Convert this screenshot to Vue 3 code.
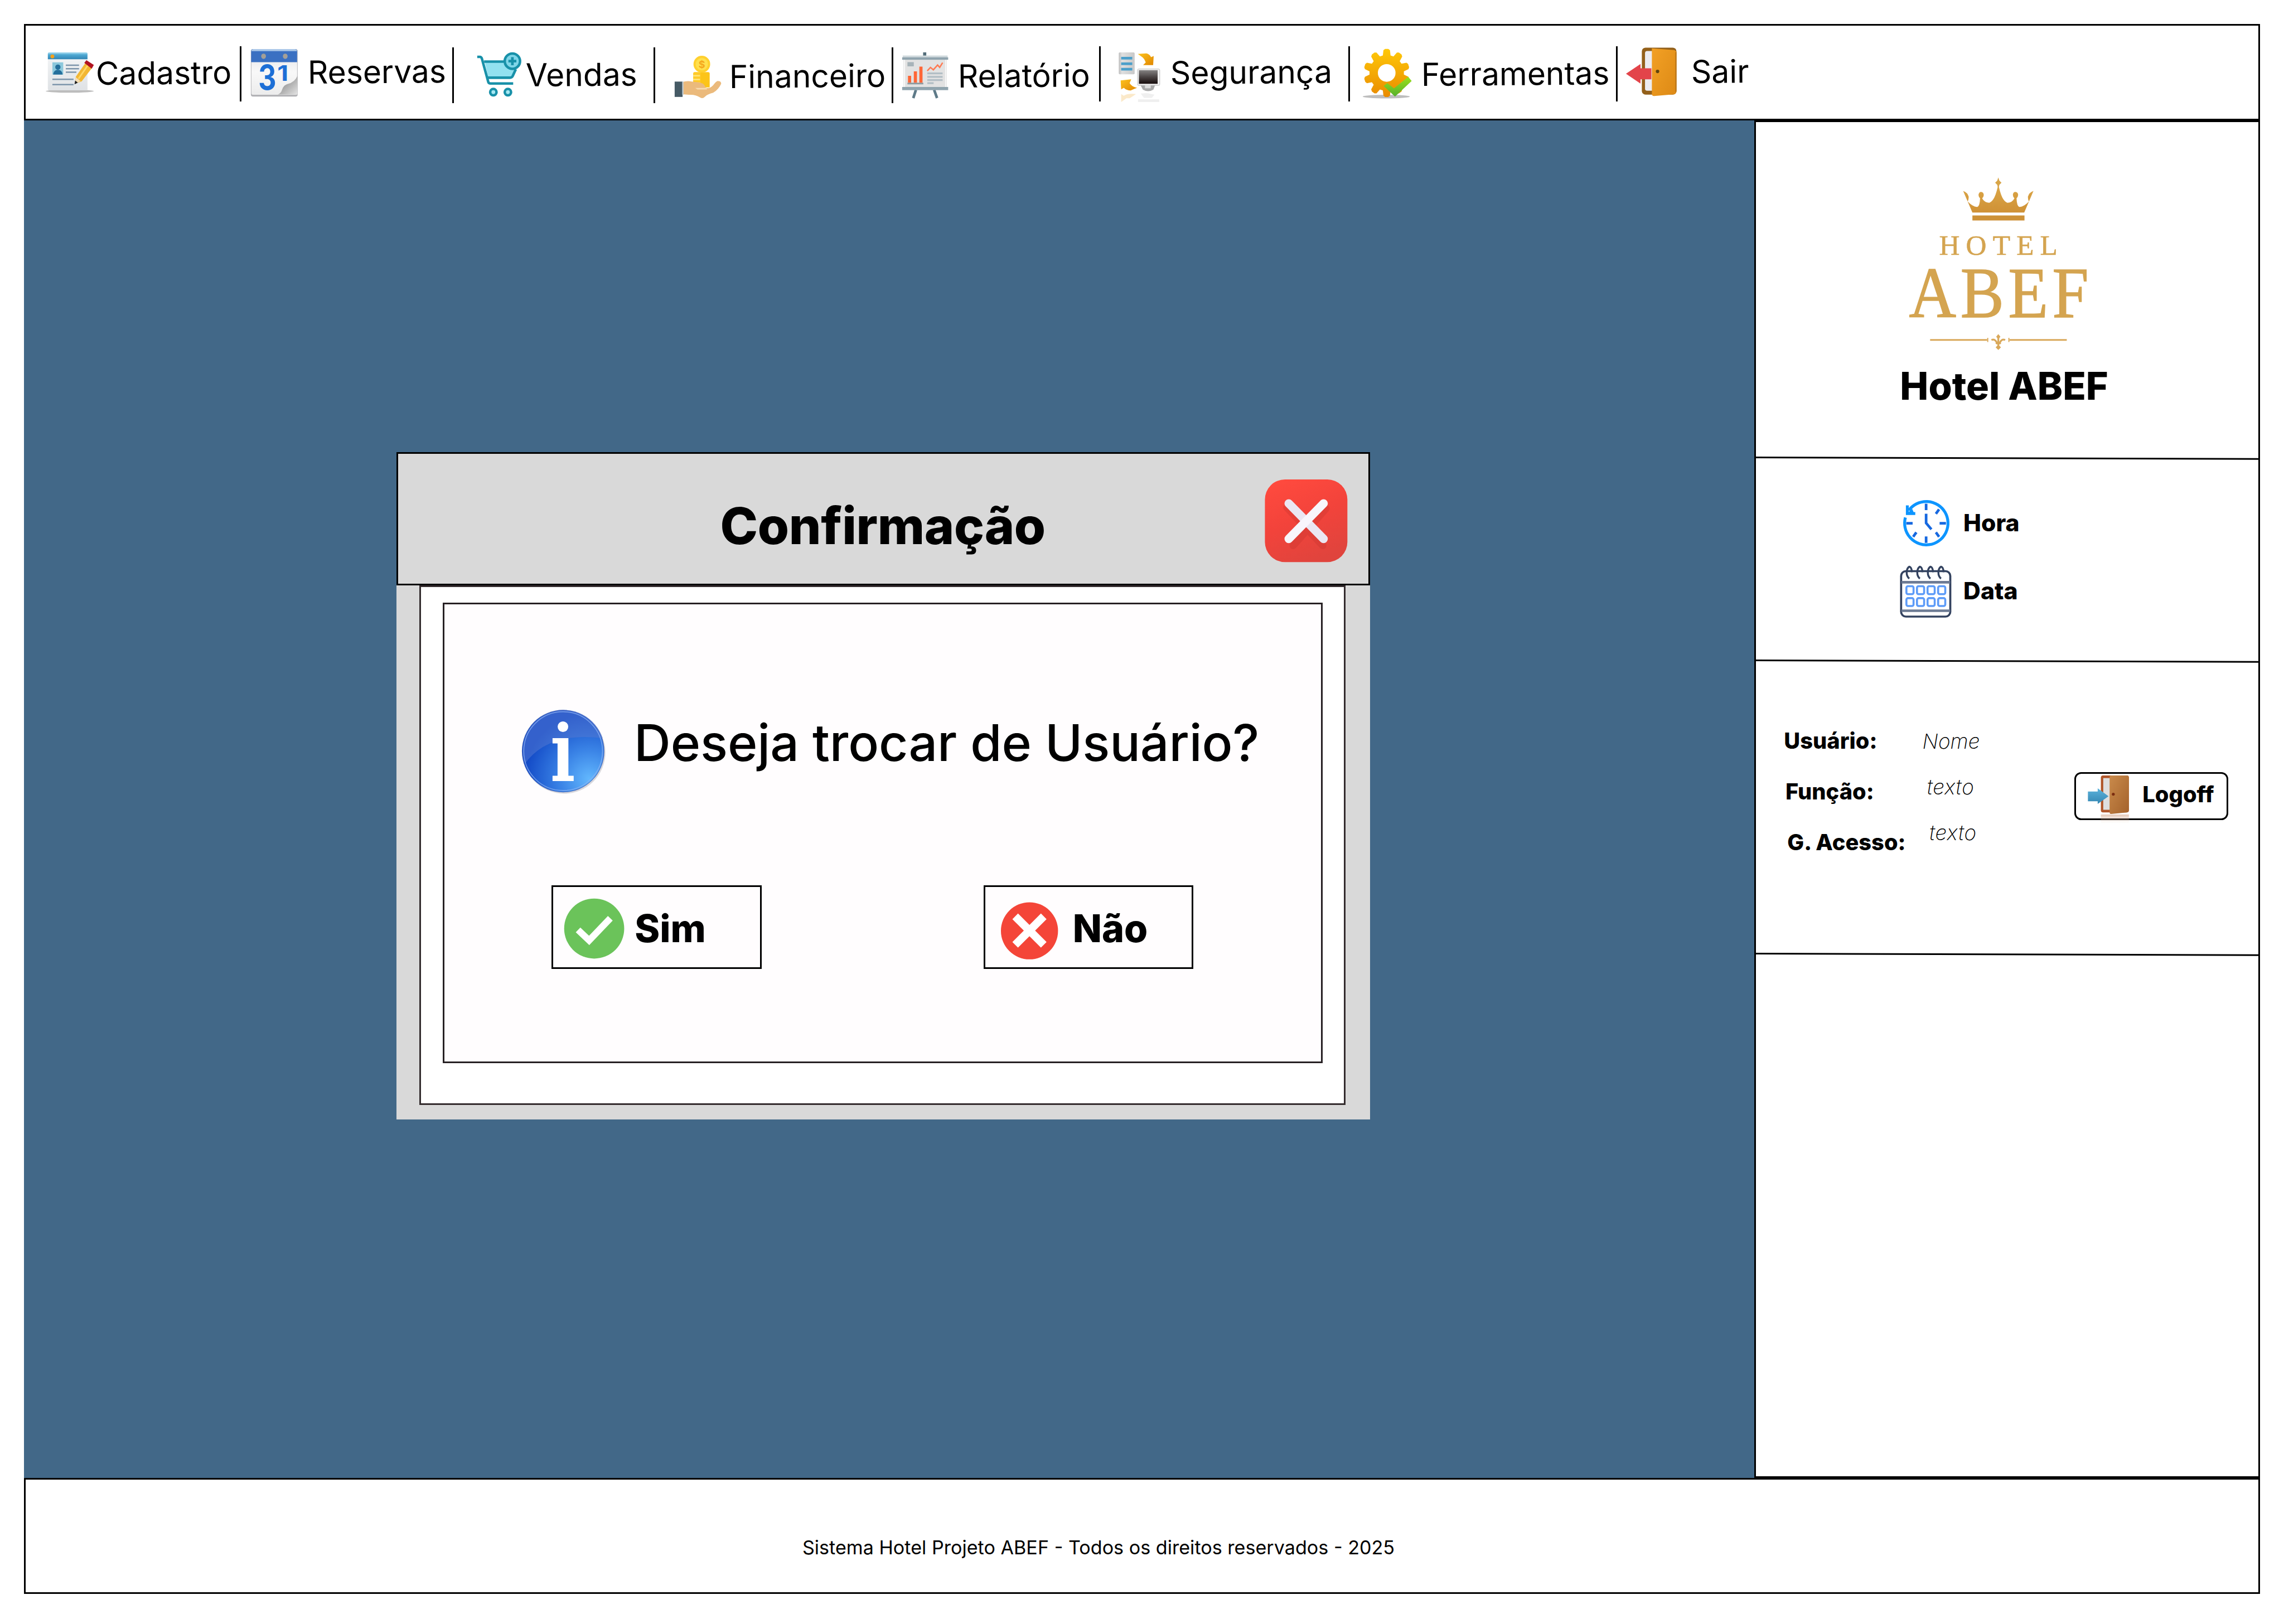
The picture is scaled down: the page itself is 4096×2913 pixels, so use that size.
<script setup>
// Contour of the ten-tooth gear used by the tools menu
const gearPath = (() => {
  const cx = 2622.3
  const cy = 138.3
  const teeth = 10
  const pts = []
  for (let i = 0; i < teeth; i++) {
    const base = (i * 360) / teeth
    const ring = [[-13, 34], [-8.5, 43.5], [-4, 45.5], [4, 45.5], [8.5, 43.5], [13, 34]]
    for (const [offset, r] of ring) {
      const a = ((base + offset - 90) * Math.PI) / 180
      pts.push(`${(cx + r * 0.96 * Math.cos(a)).toFixed(1)} ${(cy + r * Math.sin(a)).toFixed(1)}`)
    }
  }
  return `M${pts.join('L')}ZM2605.6 138.3a16.7 16.7 0 1 0 33.4 0a16.7 16.7 0 1 0 -33.4 0Z`
})()

const rings = [3611, 3631, 3651, 3671]
const dayRows = [1108.5, 1131]
</script>

<template>
  <div class="screen">
    <header class="menu">
      <div class="item cadastro">
        <svg class="icon" viewBox="86 96 92 82">
          <defs>
            <linearGradient id="cadBar" x1="0" y1="0" x2="0" y2="1">
              <stop offset="0" stop-color="#b5e3f5" /><stop offset=".35" stop-color="#4fa9d3" /><stop offset="1" stop-color="#3285b4" />
            </linearGradient>
            <linearGradient id="cadPage" x1="0" y1="0" x2="0" y2="1">
              <stop offset="0" stop-color="#f4f6f7" /><stop offset="1" stop-color="#dfe2e5" />
            </linearGradient>
          </defs>
          <ellipse cx="131.500" cy="172.500" rx="45.500" ry="3" fill="#bdbdbd" />
          <rect x="90" y="99" width="75" height="72" rx="3" fill="url(#cadPage)" />
          <path d="M90 112V102q0-3 3-3h69q3 0 3 3v10Z" fill="url(#cadBar)" />
          <circle cx="98.600" cy="106.700" r="3.600" fill="#f5a11c" />
          <rect x="98.600" y="118" width="20.500" height="23" fill="#8cc8dc" />
          <circle cx="109" cy="127" r="5" fill="#246f9b" />
          <path d="M100 141q1-9 9-9t9 9Z" fill="#246f9b" />
          <g stroke="#7d95ab" stroke-width="2.600">
            <path d="M124 123.500h25M124 130h25M124 136.500h20M98.600 150h40M98.600 160h40" />
          </g>
          <path d="M141.500 158l1.500-13 19-27 12 10-20 26Z" fill="#f2b733" />
          <path d="M148 149l18-26" stroke="#ffd766" stroke-width="3" />
          <path d="M141.500 158.500l1.500-12 9 7Z" fill="#f3dcb5" />
          <path d="M140.500 159.500l1.200-7 5 4Z" fill="#1d1d1d" />
          <path d="M159 119l4-5 14 9-4 7Z" fill="#b01220" />
        </svg>
        <span class="label">Cadastro</span>
      </div>

      <div class="item reservas">
        <svg class="icon" viewBox="472 91 92 93">
          <defs>
            <linearGradient id="resPage" x1="0" y1="0" x2="0" y2="1">
              <stop offset="0" stop-color="#e4e4e6" /><stop offset=".5" stop-color="#f8f8f8" /><stop offset="1" stop-color="#ececec" />
            </linearGradient>
            <linearGradient id="resCurl" x1="0" y1="0" x2="1" y2="1">
              <stop offset="0" stop-color="#ffffff" /><stop offset=".35" stop-color="#9b9b9b" /><stop offset="1" stop-color="#e3e3e3" />
            </linearGradient>
          </defs>
          <rect x="474" y="93" width="88.500" height="90" rx="4" fill="#b3b3b6" />
          <rect x="475" y="94" width="86.500" height="85.500" rx="3" fill="url(#resPage)" />
          <path d="M474.500 118V97q0-4 4-4h79q4 0 4 4v21Z" fill="#3a70c2" />
          <path d="M475 97q0-4 4-4h78q4 0 4 4Z" fill="#a9c6e8" />
          <ellipse cx="498" cy="106.700" rx="4.500" ry="5" fill="#a39f97" />
          <ellipse cx="539" cy="106.700" rx="4.500" ry="5" fill="#a39f97" />
          <text x="488" y="170" font-size="65" font-weight="700" textLength="34" lengthAdjust="spacingAndGlyphs" fill="#1d6fd6">3</text>
          <text x="524" y="153" font-size="41" font-weight="700" textLength="21" lengthAdjust="spacingAndGlyphs" fill="#1d6fd6">1</text>
          <path d="M562 144q-5 12-18 15q-9 3-11 11q-2 7-8 9h37Z" fill="url(#resCurl)" />
        </svg>
        <span class="label">Reservas</span>
      </div>

      <div class="item vendas">
        <svg class="icon" viewBox="900 97 88 88">
          <path d="M917 116h35q2 13 24 17l-8 14h-44Z" fill="#92e1f0" />
          <g fill="none" stroke="#1891a9" stroke-width="4.800" stroke-linejoin="round">
            <path d="M903 107.500h5q3 0 4 4l12 44q1 2.500 4 2.500h43" />
            <path d="M916 116.500h37M976 131l-6 13q-1.500 3-5 3h-42" />
            <circle cx="969.500" cy="115.700" r="14.500" fill="#7fd6e8" />
            <circle cx="933.500" cy="174.300" r="6" fill="#a5e8f3" />
            <circle cx="961" cy="174.300" r="6" fill="#a5e8f3" />
            <path d="M969.500 108v15.500M962 115.700h15" stroke-width="5" />
          </g>
        </svg>
        <span class="label">Vendas</span>
      </div>

      <div class="item financeiro">
        <svg class="icon" viewBox="1274 103 92 84">
          <path d="M1311 139q0-3 3-3h25q3 0 3 3v25h-31Z" fill="#ffca28" />
          <path d="M1311 143h13M1311 150h13M1311 157h13" stroke="#ffe57a" stroke-width="3" />
          <path d="M1325 137h17v28h-17Z" fill="#fcc419" />
          <circle cx="1327.400" cy="121" r="15.800" fill="#ffd02e" />
          <circle cx="1327.400" cy="121" r="11.500" fill="#ffe04e" />
          <text x="1327.400" y="128" font-size="19" font-weight="700" text-anchor="middle" fill="#f5a81c">$</text>
          <path d="M1290 155q10-3 18-1l10 1q14 1 16 9q0 3 7 2q6-2 10-8q5-6 8-5q5 0 5 5q-5 11-15 17q-12 3-16 8q-4 4-9 1q-9-6-21-5l-13-1Z" fill="#ebba7c" />
          <path d="M1315 166h20q2 0 2 3h-18Z" fill="#f9dcae" />
          <rect x="1276" y="154" width="15" height="29" fill="#465a65" />
          <path d="M1291.500 154v25" stroke="#c2ced4" stroke-width="2.500" />
        </svg>
        <span class="label">Financeiro</span>
      </div>

      <div class="item relatorio">
        <svg class="icon" viewBox="1704 97 90 90">
          <path d="M1748.600 99v10" stroke="#546e7a" stroke-width="6" />
          <path d="M1732 170l-5 15.500M1766.500 170l5.500 15.500" stroke="#5e7a88" stroke-width="5" />
          <rect x="1709" y="112" width="81" height="53" fill="#fafafa" stroke="#e0e0e0" />
          <rect x="1711.500" y="112" width="76" height="53" fill="#e2e2e2" />
          <rect x="1707" y="105" width="85" height="4" fill="#cfd8dc" />
          <rect x="1706" y="108.500" width="87" height="4.500" fill="#90a4ae" />
          <rect x="1706" y="164.500" width="87" height="6" fill="#90a4ae" />
          <path d="M1717 143.500h6v13h-6ZM1728 135h6v21.500h-6ZM1738.500 126h6v30.500h-6Z" fill="#ff6636" />
          <path d="M1716 156.500h30v3h-30Z" fill="#8d989d" />
          <path d="M1716 117.500h12v8h-12Z" fill="#a7b3b9" />
          <path d="M1753.500 134l6-6.500 5.500 4.500 8-9 4 4.500 5.500-9" fill="none" stroke="#ff7a52" stroke-width="2.600" />
          <path d="M1753.500 138.700h29M1753.500 145.500h29M1753.500 151.500h29M1753.500 157.200h12" stroke="#b2bec5" stroke-width="3.400" />
        </svg>
        <span class="label">Relatório</span>
      </div>

      <div class="item seguranca">
        <svg class="icon" viewBox="2113 97 83 98">
          <defs>
            <linearGradient id="segArrow" x1="0" y1="0" x2="1" y2="1">
              <stop offset="0" stop-color="#fdc31f" /><stop offset="1" stop-color="#e08600" />
            </linearGradient>
            <linearGradient id="segScreen" x1="0" y1="0" x2="0" y2="1">
              <stop offset="0" stop-color="#858383" /><stop offset=".5" stop-color="#4a4444" /><stop offset="1" stop-color="#170c0c" />
            </linearGradient>
            <linearGradient id="segTower" x1="0" y1="0" x2="1" y2="0">
              <stop offset="0" stop-color="#bdbdbd" /><stop offset=".2" stop-color="#dfdfdf" /><stop offset="1" stop-color="#c8c8c8" />
            </linearGradient>
          </defs>
          <rect x="2115.500" y="99" width="30" height="41.500" rx="2" fill="url(#segTower)" />
          <path d="M2120 110h21M2120 120.700h21M2120 131h21" stroke="#4c9fca" stroke-width="5" />
          <path d="M2151.500 102l16-1q6 1 9 7l5-2-1 17h-19l5-5q-3-8-8-11Z" fill="url(#segArrow)" />
          <rect x="2151" y="130.500" width="42" height="31" rx="2" fill="#f4f4f4" stroke="#b9b9b9" />
          <rect x="2153.500" y="132.700" width="35.500" height="25.800" fill="url(#segScreen)" />
          <path d="M2157 161.500h27l-3 8q-10 6-20 0Z" fill="#a9a9a9" />
          <path d="M2165 161h11v6h-11Z" fill="#dcdcdc" />
          <path d="M2119 152l1 17 5-3q5 5 13 5l12-5q-10-2-14-9l3-7Z" fill="url(#segArrow)" />
          <path d="M2120 178l5 3q8-5 23-3l-12 8h-6l-10 7Z" fill="#f6cf87" opacity=".45" />
          <path d="M2157 177l12-1 14 3-5 6h-15ZM2152 188h40v5h-40Z" fill="#c9c9c9" opacity=".3" />
        </svg>
        <span class="label">Segurança</span>
      </div>

      <div class="item ferramentas">
        <svg class="icon" viewBox="2575 91 96 97">
          <defs>
            <linearGradient id="gearFill" x1="0" y1="0" x2="0" y2="1">
              <stop offset="0" stop-color="#ffc808" /><stop offset="1" stop-color="#e98b00" />
            </linearGradient>
            <linearGradient id="gearCheck" x1="0" y1="0" x2="0" y2="1">
              <stop offset="0" stop-color="#9ae01c" /><stop offset="1" stop-color="#56b02c" />
            </linearGradient>
          </defs>
          <ellipse cx="2621.500" cy="183" rx="44.500" ry="3.500" fill="#bdbdbd" />
          <path :d="gearPath" fill="url(#gearFill)" fill-rule="evenodd" />
          <path d="M2616.500 163l7-5.500 12.500 10 27-22 6.500 8-31.500 29.500Z" fill="url(#gearCheck)" />
        </svg>
        <span class="label">Ferramentas</span>
      </div>

      <div class="item sair">
        <svg class="icon" viewBox="3074 88 98 94">
          <defs>
            <linearGradient id="exitDoor" x1="0" y1="0" x2="1" y2="1">
              <stop offset="0" stop-color="#f2a024" /><stop offset="1" stop-color="#dd8a16" />
            </linearGradient>
          </defs>
          <rect x="3105" y="89.500" width="65.500" height="89" rx="7" fill="#93601a" />
          <rect x="3111" y="96" width="20" height="75" rx="4" fill="#ececf0" />
          <path d="M3124 91l42 3q4 1 4.500 5v73q-.5 5-5 6l-37.500 3q-4 0-4-4Z" fill="url(#exitDoor)" />
          <path d="M3169.300 98v75" stroke="#b8751a" stroke-width="2" />
          <circle cx="3134.700" cy="134.500" r="3.300" fill="#5d430f" />
          <path d="M3075 139l27.500-18.500v8h20.500v21h-20.500v8Z" fill="#e3444a" />
        </svg>
        <span class="label">Sair</span>
      </div>
    </header>

    <main class="body">
      <section class="workspace">
        <div class="dialog">
          <div class="titlebar">
            <h1 class="title">Confirmação</h1>
            <svg class="close" viewBox="2391 905 159 160">
              <defs>
                <linearGradient id="closeFill" x1=".2" y1="0" x2=".6" y2="1">
                  <stop offset="0" stop-color="#ff4a3e" /><stop offset=".5" stop-color="#f2433b" /><stop offset="1" stop-color="#e0443d" />
                </linearGradient>
              </defs>
              <rect x="2392.500" y="907" width="156" height="156.500" rx="38" fill="url(#closeFill)" />
              <path d="M2434 960l68 72M2508 962l-62 70" stroke="#c8352f" stroke-width="14" stroke-linecap="round" opacity=".35" />
              <path d="M2437.500 952.500l66 67" stroke="#ebe6f2" stroke-width="16" stroke-linecap="round" />
              <path d="M2503.500 952.500l-66 67" stroke="#f8f6fc" stroke-width="16" stroke-linecap="round" />
            </svg>
          </div>
          <div class="panel">
            <div class="content">
              <div class="message">
                <svg class="info" viewBox="985 1341 162 164">
                  <defs>
                    <radialGradient id="infoFill" cx=".82" cy=".84" r=".8">
                      <stop offset="0" stop-color="#62b7fd" /><stop offset=".45" stop-color="#3a83e6" /><stop offset="1" stop-color="#1249c6" />
                    </radialGradient>
                  </defs>
                  <circle cx="1067" cy="1424" r="78" fill="#d9d9de" />
                  <circle cx="1065" cy="1421.500" r="78" fill="#4a67b5" />
                  <circle cx="1065" cy="1421.500" r="77" fill="url(#infoFill)" />
                  <path d="M993 1445a76 76 0 1 1 147-48q-103-13-147 48Z" fill="#5579d2" opacity=".5" />
                  <circle cx="1065" cy="1421.500" r="74.500" fill="none" stroke="#8fb4f3" stroke-width="1.800" opacity=".7" />
                  <circle cx="1064.700" cy="1375.300" r="10" fill="#ffffff" />
                  <path d="M1045 1397h30v71h10v10h-40v-10h9.500v-61h-9.500Z" fill="#ffffff" />
                </svg>
                <p class="question">Deseja trocar de Usuário?</p>
              </div>
              <div class="actions">
                <button class="choice yes">
                  <svg class="mark" viewBox="0 0 113 113">
                    <circle cx="56.500" cy="56.500" r="56.800" fill="#6bc35a" />
                    <path d="M26 59l21 20 40-42" fill="none" stroke="#ffffff" stroke-width="12.500" />
                  </svg>
                  <span class="answer">Sim</span>
                </button>
                <button class="choice no">
                  <svg class="mark" viewBox="0 0 108 109">
                    <circle cx="54" cy="54.500" r="54" fill="#f44538" />
                    <path d="M27 27l54 54M81 27l-54 54" stroke="#ffffff" stroke-width="15" />
                  </svg>
                  <span class="answer">Não</span>
                </button>
              </div>
            </div>
          </div>
        </div>
      </section>

      <aside class="sidebar">
        <div class="brand">
          <svg class="logo" viewBox="3600 330 360 340">
            <defs>
              <linearGradient id="gold" x1="0" y1="0" x2="0" y2="1">
                <stop offset="0" stop-color="#dca848" /><stop offset="1" stop-color="#cf9136" />
              </linearGradient>
            </defs>
            <path d="M3731 402L3713.500 361Q3722 364 3724 372Q3724 378 3722 381Q3731 391 3740 391.500Q3745 390 3745.500 375Q3742.500 372 3742.500 368.500Q3743.500 363 3747.500 363Q3752 363.500 3752.500 368.500Q3752.500 372 3749.500 375Q3754 383.500 3763 383.500Q3774 380 3780 348Q3786 380 3797 383.500Q3806 383.500 3810.500 375Q3807.500 372 3807.500 368.500Q3808 363 3812.500 363Q3817 363.500 3817.500 368.500Q3817.500 372 3814.500 375Q3815 390 3820 391.500Q3829 391 3838 381Q3836 378 3836 372Q3838 364 3846.500 361L3829 402Z" fill="url(#gold)" />
            <path d="M3780 335.500l2 6 4 4-4 4-1 4h-2l-1-4-4-4 4-4Z" fill="#d8a548" />
            <rect x="3731" y="407.500" width="98.500" height="9.500" fill="#cd9137" />
            <text class="hotel-word" x="3668" y="482" font-size="54" textLength="224" lengthAdjust="spacing">HOTEL</text>
            <text class="abef-word" x="3611" y="599.500" font-size="137" textLength="348" lengthAdjust="spacingAndGlyphs">ABEF</text>
            <g fill="none" stroke="#d9a85a" stroke-width="3.400">
              <path d="M3651 643h108M3801 643h108.500" />
              <path d="M3760 639v8M3800 639v8" stroke-width="2" />
              <path d="M3780 635v25M3767 643q8-3 11 8M3793 643q-8-3-11 8M3775 649h10" />
            </g>
            <path d="M3780 632l4 5-4 5-4-5ZM3780 652l5 5-5 5-5-5Z" fill="#d9a85a" />
          </svg>
          <h2 class="hotel-name">Hotel ABEF</h2>
        </div>
        <div class="rule"></div>
        <div class="clock">
          <div class="row hora">
            <svg viewBox="3598 945 90 90">
              <path d="M3603.300 979a41 41 0 1 0 6.500 -13.500" fill="none" stroke="#0d95ff" stroke-width="5.500" />
              <path d="M3607 956v15.500h15" fill="none" stroke="#0d95ff" stroke-width="5.500" />
              <path d="M3607 971.500l9-9 4 9Z" fill="#0d95ff" />
              <path d="M3642.500 953v12M3642.500 1015v12M3605 990h12M3668 990h12M3661 972l6-8.500M3661 1007l6 8.500M3624 1007l-6 8.500M3642.500 972v17.500l10 12" fill="none" stroke="#1668e0" stroke-width="5" />
            </svg>
            <span class="caption">Hora</span>
          </div>
          <div class="row data">
            <svg viewBox="3593 1070 98 98">
              <rect x="3595.500" y="1080" width="93" height="86" rx="9" fill="#ffffff" stroke="#33425f" stroke-width="3.900" />
              <path d="M3596 1101h92M3596 1155h92" stroke="#6d7b94" stroke-width="4.800" />
              <g fill="none" stroke="#33425f" stroke-width="3.600">
                <path v-for="x in rings" :key="x" :d="`M${x + 5} 1082q-1-10-5-10.500q-5 3-5 11q0 8 5 11.500`" />
              </g>
              <g fill="none" stroke="#5d9bf8" stroke-width="3.800">
                <template v-for="y in dayRows" :key="y">
                  <rect v-for="x in rings" :key="x" :x="x - 5.500" :y="y" width="13.500" height="15" rx="3" />
                </template>
              </g>
            </svg>
            <span class="caption">Data</span>
          </div>
        </div>
        <div class="rule"></div>
        <div class="session">
          <div class="keys">
            <span class="key">Usuário:</span>
            <span class="key">Função:</span>
            <span class="key">G. Acesso:</span>
          </div>
          <div class="values">
            <span class="value">Nome</span>
            <span class="value">texto</span>
            <span class="value">texto</span>
          </div>
          <button class="logoff">
            <svg viewBox="3947 1465 82 95">
              <defs>
                <linearGradient id="logDoor" x1="0" y1="0" x2="1" y2="1">
                  <stop offset="0" stop-color="#c98a4b" /><stop offset="1" stop-color="#a4622b" />
                </linearGradient>
                <linearGradient id="logFade" x1="0" y1="0" x2="0" y2="1">
                  <stop offset="0" stop-color="#c98f6c" stop-opacity=".5" /><stop offset="1" stop-color="#e9cdbc" stop-opacity="0" />
                </linearGradient>
                <linearGradient id="logArrow" x1="0" y1="0" x2="0" y2="1">
                  <stop offset="0" stop-color="#5bb2db" /><stop offset="1" stop-color="#3487b3" />
                </linearGradient>
              </defs>
              <path d="M3974 1541h53v17h-53Z" fill="url(#logFade)" />
              <rect x="3974" y="1467" width="53" height="70" rx="4" fill="#b0562a" />
              <rect x="3978.500" y="1472" width="14" height="60" fill="#dedede" />
              <path d="M3990.500 1470q0-3 4-3h29q3.500 0 3.500 4v61q0 4-4 5l-29 3q-3.500 0-3.500-3Z" fill="url(#logDoor)" />
              <circle cx="3997.500" cy="1502.500" r="2.800" fill="#7b2c10" />
              <path d="M3949.500 1497.500h18.500v-6l20.500 15-20.500 14.500v-5h-18.500Z" fill="url(#logArrow)" />
            </svg>
            <span class="logoff-text">Logoff</span>
          </button>
        </div>
        <div class="rule"></div>
      </aside>
    </main>

    <footer class="footer">
      <p class="copyright">Sistema Hotel Projeto ABEF - Todos os direitos reservados - 2025</p>
    </footer>
  </div>
</template>

<style>
body {
  margin: 0;
  background: #ffffff;
  overflow: hidden;
}
</style>

<style scoped>
.screen {
  --line: 3.2px solid #000000;
  zoom: 0.948148;
  width: 4320px;
  height: 3072px;
  padding: 45px;
  box-sizing: border-box;
  background: #ffffff;
  color: #000000;
  font-family: Inter, "Liberation Sans", sans-serif;
  font-optical-sizing: none;
}
.screen * {
  box-sizing: border-box;
}
h1, h2, p {
  margin: 0;
}
svg {
  display: block;
  flex: none;
  overflow: visible;
}
span, h1, h2, p {
  white-space: nowrap;
  line-height: 1;
}
button {
  padding: 0;
  font-family: inherit;
  color: inherit;
  text-align: left;
}

/* top menu */
.menu {
  display: flex;
  align-items: flex-start;
  width: 4230px;
  height: 183px;
  border: var(--line);
}
.item {
  display: flex;
  align-items: flex-start;
  flex: none;
  height: 105px;
  margin-top: 39px;
  border-right: var(--line);
}
.label {
  font-size: 60px;
  font-weight: 400;
  transform: rotate(-0.45deg);
  transform-origin: 0 86%;
}
.cadastro { width: 408px; }
.cadastro .icon { width: 92px; height: 82px; margin: 9px 0 0 38px; }
.cadastro .label { margin: 22.5px 0 0 3.2px; }
.reservas { width: 402px; margin-top: 42px; }
.reservas .icon { width: 92px; height: 93px; margin: 1px 0 0 16px; }
.reservas .label { margin: 17.2px 0 0 18px; }
.vendas { width: 381px; margin-top: 42px; }
.vendas .icon { width: 88px; height: 88px; margin: 7px 0 0 42px; }
.vendas .label { margin: 22.7px 0 0 6px; }
.financeiro { width: 450px; margin-top: 42px; }
.financeiro .icon { width: 92px; height: 84px; margin: 13px 0 0 35px; }
.financeiro .label { margin: 26px 0 0 13px; }
.relatorio { width: 393px; }
.relatorio .icon { width: 90px; height: 90px; margin: 10px 0 0 15px; }
.relatorio .label { margin: 27.9px 0 0 18px; }
.seguranca { width: 471px; }
.seguranca .icon { width: 83px; height: 98px; margin: 10px 0 0 31px; }
.seguranca .label { margin: 21.2px 0 0 17.5px; }
.ferramentas { width: 507px; }
.ferramentas .icon { width: 96px; height: 97px; margin: 4px 0 0 22px; }
.ferramentas .label { margin: 24.5px 0 0 17px; }
.sair { border-right: 0; }
.sair .icon { width: 98px; height: 94px; margin: 1px 0 0 14px; }
.sair .label { margin: 19.2px 0 0 26.5px; }

/* work area */
.body {
  display: flex;
  width: 4230px;
  height: 2568px;
}
.workspace {
  width: 3273px;
  padding: 627px 0 0 705px;
  background: #426888;
}
.dialog {
  width: 1841px;
  height: 1263px;
  background: #d9d9d9;
}
.titlebar {
  display: flex;
  align-items: flex-start;
  justify-content: space-between;
  height: 252px;
  padding: 0 38px 0 609px;
  border: var(--line);
}
.title {
  margin-top: 88.5px;
  font-size: 96px;
  font-weight: 800;
  letter-spacing: -0.4px;
}
.close {
  width: 159px;
  height: 160px;
  margin-top: 47px;
}
.panel {
  height: 983px;
  margin: 0 46px 0 43px;
  padding: 30.5px 40px 0 41px;
  border: 3.2px solid #342c2e;
  background: #ffffff;
}
.content {
  height: 870.5px;
  border: 3.2px solid #272124;
  background: #fffdfe;
}
.message {
  display: flex;
  align-items: flex-start;
  height: 164px;
  margin: 197px 0 0 145px;
}
.info {
  width: 162px;
  height: 164px;
}
.question {
  margin: 17px 0 0 52px;
  font-size: 96px;
  font-weight: 500;
  letter-spacing: -0.1px;
}
.actions {
  display: flex;
  gap: 420px;
  margin: 170px 0 0 203px;
}
.choice {
  display: flex;
  align-items: flex-start;
  width: 397px;
  height: 158px;
  border: var(--line);
  background: transparent;
}
.answer {
  font-size: 72px;
  font-weight: 800;
}
.yes .mark { width: 113px; height: 113px; margin: 22px 0 0 21px; }
.yes .answer { margin: 42.2px 0 0 20px; }
.no .mark { width: 108px; height: 109px; margin: 28.7px 0 0 30px; }
.no .answer { margin: 42.2px 0 0 27.5px; }

/* sidebar */
.sidebar {
  width: 957px;
  border: var(--line);
  background: #ffffff;
}
.brand {
  height: 632.6px;
  padding-top: 99px;
}
.logo {
  width: 360px;
  height: 340px;
  margin-left: 279px;
}
.hotel-word, .abef-word {
  font-family: "Liberation Serif", serif;
  fill: #d4a450;
  stroke: #d4a450;
}
.hotel-word { stroke-width: 0.6px; }
.abef-word { stroke-width: 1.6px; letter-spacing: 9px; }
.hotel-name {
  margin: 23.8px 0 0 272.5px;
  font-size: 72px;
  font-weight: 800;
}
.rule {
  height: 3.1px;
  background: #000000;
  transform: rotate(0.17deg);
  transform-origin: 0 50%;
}
.clock {
  height: 381px;
  padding-top: 78.2px;
}
.row {
  display: flex;
  align-items: flex-start;
}
.caption {
  font-size: 45px;
  font-weight: 800;
}
.hora svg { width: 90px; height: 90px; margin-left: 277px; }
.hora .caption { margin: 22px 0 0 25.5px; }
.data { margin-top: 35px; }
.data svg { width: 98px; height: 98px; margin-left: 272px; }
.data .caption { margin: 26px 0 0 22.5px; }
.session {
  display: flex;
  align-items: flex-start;
  height: 552px;
}
.keys, .values {
  display: flex;
  flex-direction: column;
}
.keys {
  width: 310px;
  gap: 54px;
  padding: 129.3px 0 0 53px;
}
.key {
  font-size: 42px;
  font-weight: 800;
}
.key:nth-child(2) { margin-left: 3px; }
.key:nth-child(3) { margin-left: 6.5px; }
.values {
  width: 292.7px;
  gap: 47.8px;
  padding: 131.5px 0 0 5px;
}
.value {
  font-size: 39px;
  font-style: italic;
  font-weight: 200;
}
.value:nth-child(2) { margin-left: 8.5px; letter-spacing: 1px; }
.value:nth-child(3) { margin-left: 13px; letter-spacing: 1px; }
.logoff {
  display: flex;
  align-items: flex-start;
  width: 291px;
  height: 90px;
  margin-top: 210px;
  border: var(--line);
  border-radius: 13px;
  background: #ffffff;
}
.logoff svg { width: 82px; height: 95px; margin: 1px 0 0 20px; }
.logoff-text {
  margin: 18px 0 0 23.5px;
  font-size: 42px;
  font-weight: 800;
}

/* footer */
.footer {
  width: 4230px;
  height: 219px;
  padding: 110.7px 0 0 1469.5px;
  border: var(--line);
}
.copyright {
  font-size: 36px;
  font-weight: 400;
}
</style>
